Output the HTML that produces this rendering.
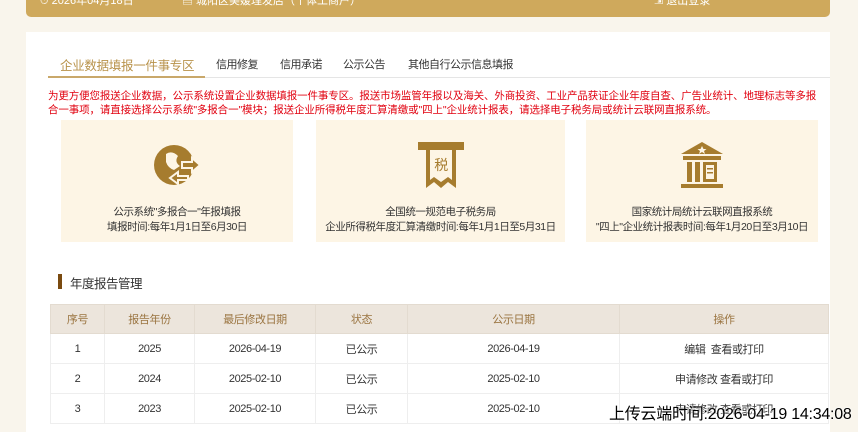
<!DOCTYPE html>
<html><head><meta charset="utf-8"><style>
*{margin:0;padding:0;box-sizing:border-box}
body{width:858px;height:424px;overflow:hidden;background:#f9f5ec;font-family:"Liberation Sans","Noto Sans CJK SC",sans-serif;position:relative;font-size:12px;color:#333}
.top{position:absolute;left:26px;top:0;width:804px;height:17px;background:#cfa95c;border-radius:0 0 5px 5px;color:#fff;font-size:11px}
.top span{position:absolute;top:-8px}
.card{position:absolute;left:26px;top:32px;width:804px;height:400px;background:#fff}
.tabs{position:absolute;left:22px;top:22px;width:782px;height:24px;border-bottom:1px solid #e5e5e5;letter-spacing:-0.5px}
.tabs span{position:absolute;top:2px;font-size:11px;color:#333}
.tabs .act{color:#b8924a;font-size:12.5px;left:12px;top:1px;letter-spacing:-0.3px}
.ul{position:absolute;left:22px;top:44px;width:157px;height:2px;background:#c9a86a}
.red{position:absolute;left:22px;top:57px;width:790px;color:#e1000f;font-size:10.5px;line-height:14px;letter-spacing:-0.12px;white-space:nowrap}
.box{position:absolute;top:88px;height:122px;background:#fdf5e5;text-align:center;font-size:10.5px;line-height:15px;color:#333;letter-spacing:-0.45px}
.box svg{position:absolute;left:50%;top:20px;transform:translateX(-50%)}
.box .t{position:absolute;left:0;right:0;top:85px;white-space:nowrap}
.h{position:absolute;left:32px;top:241px;font-size:12.5px;color:#333;padding-left:12px;letter-spacing:-0.5px}
.h:before{content:"";position:absolute;left:0;top:1px;width:4px;height:15px;background:#7a4a10}
table{position:absolute;left:24px;top:272px;border-collapse:collapse;font-size:11px;table-layout:fixed;letter-spacing:-0.4px}
td,th{border:1px solid #eee;text-align:center;height:30px}
th{background:#ece5dc;color:#9a7440;font-weight:normal;height:29px;border-color:#e3dbd0}
.ov{position:absolute;left:609px;top:400px;font-size:16px;color:#000;text-shadow:0 0 2px #fff,0 0 2px #fff;letter-spacing:-0.25px}
</style></head><body>
<div class="top"><span style="left:14px">⏱ 2026年04月18日</span><span style="left:156px">▤ 城阳区美媛理发店（个体工商户）</span><span style="left:628px">⇲ 退出登录</span></div>
<div class="card">
<div class="tabs"><span class="act">企业数据填报一件事专区</span><span style="left:168px">信用修复</span><span style="left:232px">信用承诺</span><span style="left:295px">公示公告</span><span style="left:360px">其他自行公示信息填报</span></div>
<div class="ul"></div>
<div class="red">为更方便您报送企业数据，公示系统设置企业数据填报一件事专区。报送市场监管年报以及海关、外商投资、工业产品获证企业年度自查、广告业统计、地理标志等多报<br>合一事项，请直接选择公示系统"多报合一"模块；报送企业所得税年度汇算清缴或"四上"企业统计报表，请选择电子税务局或统计云联网直报系统。</div>
<div class="box" style="left:35px;width:232px">
<svg width="50" height="50" viewBox="0 0 50 50"><circle cx="22" cy="25" r="20" fill="#a67c2e"/><path d="M14 14 q6 -4 12 2 q-4 6 2 10 l-6 4 q-6 -2 -8 -8z" fill="#fdf5e5"/><path d="M30 22h10v-4l8 7-8 7v-4h-10z" fill="#a67c2e" stroke="#fdf5e5" stroke-width="2"/><path d="M36 36h-10v-4l-8 6 8 6v-4h10z" fill="#a67c2e" stroke="#fdf5e5" stroke-width="2"/></svg>
<div class="t">公示系统"多报合一"年报填报<br>填报时间:每年1月1日至6月30日</div></div>
<div class="box" style="left:290px;width:249px">
<svg width="50" height="50" viewBox="0 0 50 50"><rect x="2" y="2" width="46" height="8" fill="#a67c2e"/><path d="M10 8v40l8-6 7 6 7-6 8 6v-40z" fill="#a67c2e"/><path d="M14 10v30l4-3 7 5 7-5 4 3v-30z" fill="#fdf5e5"/><text x="25" y="30" font-size="14" text-anchor="middle" fill="#a67c2e" font-family="Noto Sans CJK SC">税</text></svg>
<div class="t">全国统一规范电子税务局<br>企业所得税年度汇算清缴时间:每年1月1日至5月31日</div></div>
<div class="box" style="left:560px;width:232px">
<svg width="50" height="50" viewBox="0 0 50 50"><path d="M25 2 L46 14 H4z" fill="#a67c2e"/><path d="M25 6 l1.5 3h3l-2.5 2 1 3-3-2-3 2 1-3-2.5-2h3z" fill="#fdf5e5"/><rect x="6" y="16" width="38" height="4" fill="#a67c2e"/><rect x="10" y="22" width="5" height="20" fill="#a67c2e"/><rect x="18" y="22" width="5" height="20" fill="#a67c2e"/><rect x="26" y="22" width="14" height="20" fill="#a67c2e"/><rect x="29" y="25" width="8" height="14" fill="#fdf5e5"/><rect x="30" y="28" width="6" height="1.5" fill="#a67c2e"/><rect x="30" y="32" width="6" height="1.5" fill="#a67c2e"/><rect x="4" y="44" width="42" height="4" fill="#a67c2e"/></svg>
<div class="t">国家统计局统计云联网直报系统<br>"四上"企业统计报表时间:每年1月20日至3月10日</div></div>
<div class="h">年度报告管理</div>
<table>
<colgroup><col style="width:54px"><col style="width:90px"><col style="width:121px"><col style="width:92px"><col style="width:212px"><col style="width:209px"></colgroup>
<tr><th>序号</th><th>报告年份</th><th>最后修改日期</th><th>状态</th><th>公示日期</th><th>操作</th></tr>
<tr><td>1</td><td>2025</td><td>2026-04-19</td><td>已公示</td><td>2026-04-19</td><td>编辑&nbsp;&nbsp;查看或打印</td></tr>
<tr><td>2</td><td>2024</td><td>2025-02-10</td><td>已公示</td><td>2025-02-10</td><td>申请修改&nbsp;查看或打印</td></tr>
<tr><td>3</td><td>2023</td><td>2025-02-10</td><td>已公示</td><td>2025-02-10</td><td>申请修改&nbsp;查看或打印</td></tr>
</table>
</div>
<div class="ov">上传云端时间:2026-04-19 14:34:08</div>
</body></html>
